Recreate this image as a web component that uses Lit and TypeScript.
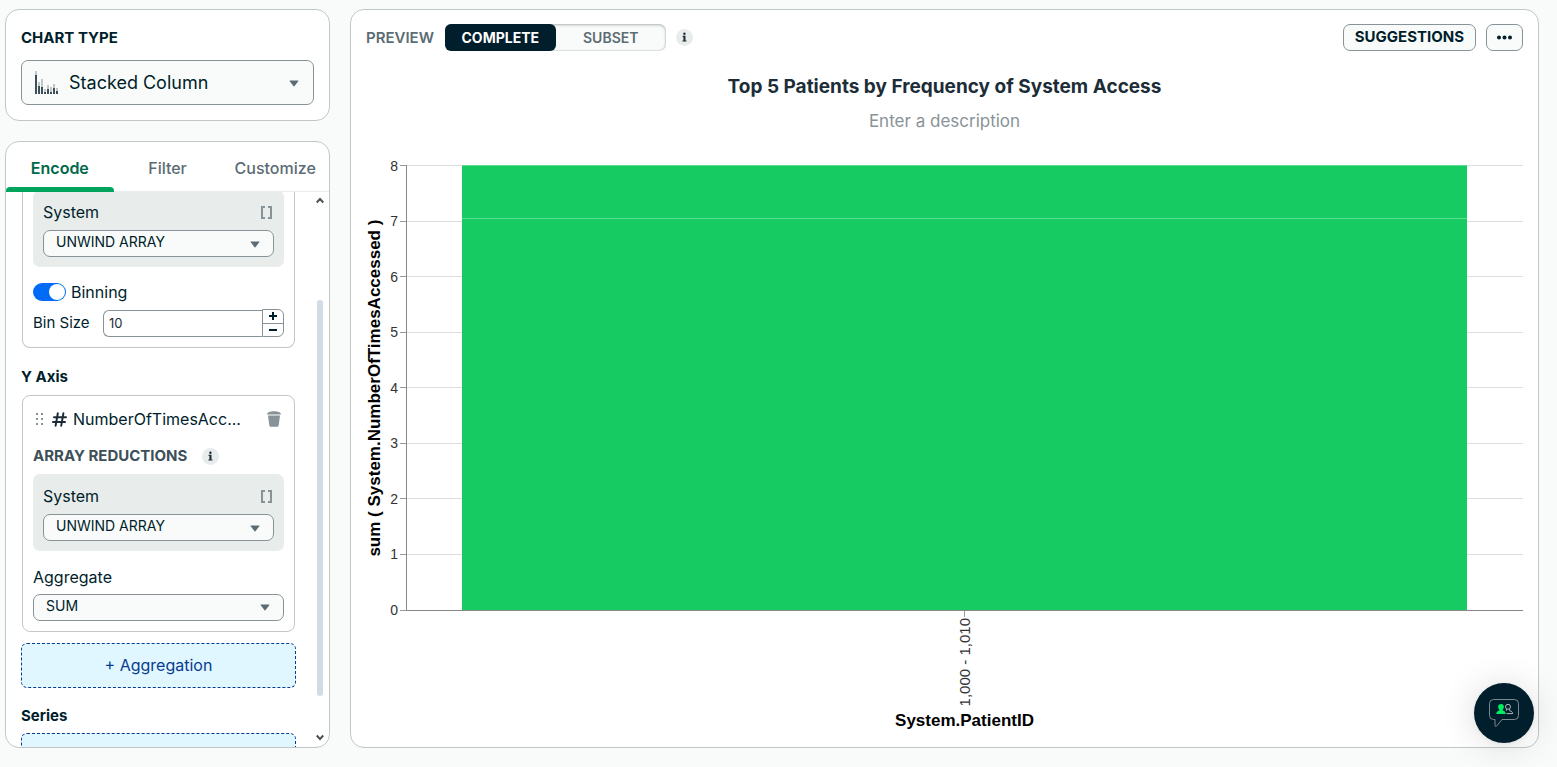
import { LitElement, html, css, svg } from "lit";
import { customElement, property, state } from "lit/decorators.js";
import { classMap } from "lit/directives/class-map.js";
import { styleMap } from "lit/directives/style-map.js";

const infoIcon = html`<svg class="info" viewBox="0 0 17 17" width="17" height="17" aria-label="More information">
  <circle cx="8.5" cy="8.5" r="8.5" fill="#e8edeb" />
  <g fill="#1c2d38">
    <circle cx="8.4" cy="4.7" r="1.2" />
    <path d="M6.600 6.800h2.900v4.700h1v1.100H6.400v-1.100h1V7.900h-.8z" />
  </g>
</svg>`;

const caret = html`<svg class="caret" viewBox="0 0 10 7" width="10" height="7" aria-hidden="true">
  <path d="M1 .5h8a.4.4 0 0 1 .3.7L5.400 6.200a.5.5 0 0 1-.8 0L.7 1.200A.4.4 0 0 1 1 .5z" fill="#5c6c75" />
</svg>`;

const selectStyles = css`
  .select {
    display: grid;
    align-items: center;
  }
  .select > * {
    grid-area: 1 / 1;
  }
  .select select {
    appearance: none;
    width: 100%;
    height: 27px;
    margin: 0;
    padding: 0 28px 5px 12px;
    border: 1px solid #889397;
    border-radius: 7px;
    background: #f9fbfa;
    color: #001e2b;
    font: 14px Inter, sans-serif;
  }
  .select .caret {
    justify-self: end;
    margin-right: 14px;
    pointer-events: none;
  }
`;

/** Grey block that chooses how an array field is reduced. */
@customElement("array-reduction")
class ArrayReduction extends LitElement {
  @property() field = "System";

  static styles = [
    selectStyles,
    css`
      :host {
        display: block;
        padding: 12px 10px 10px;
        border-radius: 7px;
        background: #e8edeb;
      }
      .head {
        display: flex;
        justify-content: space-between;
        align-items: center;
        padding-bottom: 8px;
        line-height: 20px;
      }
      .head svg {
        margin-right: 1px;
      }
      .select .caret {
        margin-top: 1px;
      }
    `,
  ];

  render() {
    return html`
      <div class="head">
        <label for="method">${this.field}</label>
        <svg viewBox="0 0 13 13" width="13" height="13" fill="none" stroke="#889397" stroke-width="2" aria-hidden="true">
          <path d="M5 1H2v11h3M8 1h3v11H8" />
        </svg>
      </div>
      <div class="select">
        <select id="method"><option>UNWIND ARRAY</option></select>
        ${caret}
      </div>
    `;
  }
}

interface Segment {
  value: number;
}

/** Stacked column chart with a single binned category. */
@customElement("column-chart")
class ColumnChart extends LitElement {
  private ticks = [8, 7, 6, 5, 4, 3, 2, 1, 0];
  private segments: Segment[] = [{ value: 52 }, { value: 392 }];

  static styles = css`
    :host {
      display: grid;
      grid-template-columns: 18px 16px 6px 1fr;
      grid-template-rows: 1fr auto;
      font-family: "Liberation Sans", Arial, sans-serif;
      color: #000;
    }
    .y-title,
    .tick-label {
      writing-mode: vertical-rl;
      transform: rotate(180deg);
      white-space: nowrap;
    }
    .y-title,
    .x-title {
      font-size: 17px;
      font-weight: 700;
      line-height: 18px;
      text-align: center;
    }
    .scale {
      display: flex;
      flex-direction: column;
      justify-content: space-between;
    }
    .scale > div {
      display: flex;
      justify-content: flex-end;
      align-items: center;
      height: 1px;
    }
    .labels {
      padding-right: 2px;
      font-size: 14px;
      color: #333;
    }
    .ticks > div {
      background: #999;
    }
    .grid,
    .bar {
      grid-area: 1 / 4;
    }
    .grid {
      border-left: 1px solid #888;
    }
    .grid > div {
      background: #ddd;
    }
    .grid > div:last-child {
      z-index: 1;
      background: #888;
    }
    .bar {
      display: flex;
      flex-direction: column;
      margin: 0 5% 1px;
    }
    .segment {
      box-sizing: border-box;
      border-top: 1px solid #5cdc90;
      background: #16cc62;
    }
    .x-axis {
      grid-area: 2 / 4;
      display: flex;
      flex-direction: column;
      align-items: center;
    }
    .x-tick {
      width: 1px;
      height: 6px;
      background: #999;
    }
    .tick-label {
      padding-bottom: 1px;
      font-size: 15px;
      line-height: 17px;
      color: #333;
    }
    .x-title {
      padding-top: 6px;
    }
  `;

  render() {
    return html`
      <div class="y-title">sum ( System.NumberOfTimesAccessed )</div>
      <div class="scale labels">${this.ticks.map((t) => html`<div>${t}</div>`)}</div>
      <div class="scale ticks">${this.ticks.map(() => html`<div></div>`)}</div>
      <div class="scale grid">${this.ticks.map(() => html`<div></div>`)}</div>
      <div class="bar">
        ${this.segments.map((s) => html`<div class="segment" style=${styleMap({ flex: `${s.value} 0 0` })}></div>`)}
      </div>
      <div class="x-axis">
        <div class="x-tick"></div>
        <div class="tick-label">1,000 - 1,010</div>
        <div class="x-title">System.PatientID</div>
      </div>
    `;
  }
}

@customElement("app-root")
class AppRoot extends LitElement {
  @state() private tab = "Encode";
  @state() private mode = "COMPLETE";

  static styles = [
    selectStyles,
    css`
      :host {
        box-sizing: border-box;
        display: grid;
        grid-template-columns: 325px 1fr;
        gap: 20px;
        height: 100vh;
        padding: 9px 18px 19px 5px;
        background: #f9fbfa;
        color: #001e2b;
        font: 16px/20px Inter, sans-serif;
      }
      * {
        box-sizing: border-box;
      }
      button,
      input {
        margin: 0;
        font: inherit;
        color: inherit;
      }
      h2,
      h3,
      h4 {
        margin: 0;
        font-size: 15px;
        line-height: 20px;
        font-weight: 700;
      }
      .panel {
        border: 1px solid #c1c7c6;
        border-radius: 14px;
        background: #fff;
      }
      aside {
        display: flex;
        flex-direction: column;
        gap: 20px;
        min-height: 0;
      }

      .type {
        padding: 18px 15px 15px;
      }
      .type h2 {
        padding-bottom: 13px;
        line-height: 19px;
      }
      .type select {
        height: 45px;
        padding: 0 32px 0 47px;
        font-size: 18px;
      }
      .type .chart-icon {
        margin-left: 13px;
        pointer-events: none;
      }
      .type .caret {
        margin-right: 15px;
        margin-top: 1px;
      }

      .encode {
        display: flex;
        flex-direction: column;
        flex: 1;
        min-height: 0;
        overflow: hidden;
      }
      .tabs {
        display: flex;
        height: 50px;
        border-bottom: 1px solid #e8edeb;
      }
      .tab {
        position: relative;
        flex: 1;
        height: 50px;
        padding: 2px 0 0;
        border: 0;
        background: none;
        color: #5c6c75;
        font-weight: 500;
      }
      .tab.on {
        color: #00684a;
        font-weight: 600;
      }
      .tab.on::after {
        content: "";
        position: absolute;
        inset: auto 0 0;
        height: 5px;
        border-radius: 4px 4px 0 0;
        background: #00a35c;
      }
      .body {
        display: flex;
        flex: 1;
        min-height: 0;
      }
      .fields {
        flex: 1;
        min-width: 0;
        padding: 0 16px 0 15px;
        overflow: hidden;
      }
      .card {
        margin: 0 1px;
        padding: 10px;
        border: 1px solid #c1c7c6;
        border-radius: 8px;
      }
      .card.continued {
        margin-top: -2px;
        padding-top: 0;
        border-top: 0;
        border-radius: 0 0 8px 8px;
      }
      .binning {
        display: flex;
        align-items: center;
        gap: 5px;
        padding: 15px 0 7px;
      }
      .switch {
        appearance: none;
        width: 33px;
        height: 18px;
        padding: 1px;
        border-radius: 9px;
        background: #016bf8;
      }
      .switch::after {
        content: "";
        display: block;
        width: 16px;
        height: 16px;
        margin-left: 15px;
        border-radius: 50%;
        background: #fff;
      }
      .bin-size {
        display: flex;
        align-items: center;
        font-size: 15px;
      }
      .bin-size label {
        width: 70px;
      }
      .bin-size input {
        flex: 1;
        min-width: 0;
        height: 27px;
        padding: 0 5px;
        border: 1px solid #889397;
        border-right: 0;
        border-radius: 6px 0 0 6px;
        background: #fff;
        font-size: 13px;
        color: #1c2d38;
      }
      .steps {
        display: grid;
        width: 22px;
        height: 28px;
        border: 1px solid #889397;
        border-radius: 0 6px 6px 0;
      }
      .steps button {
        display: grid;
        place-items: center;
        padding: 0;
        border: 0;
        background: none;
      }
      .steps button + button {
        border-top: 1px solid #889397;
      }
      .fields h3 {
        padding: 19px 0 8px;
      }
      .field-row {
        display: flex;
        align-items: center;
        padding: 3px 3px 3px 3px;
      }
      .field-row .hash {
        margin: 0 6px 0 8px;
      }
      .field-row span {
        flex: 1;
      }
      .remove {
        display: flex;
        padding: 0;
        border: 0;
        background: none;
      }
      .reductions {
        display: flex;
        align-items: center;
        gap: 15px;
        padding: 14px 0 8px;
        color: #3d4f58;
      }
      .aggregate {
        display: block;
        padding: 16px 0 7px;
      }
      .add {
        display: block;
        width: 100%;
        height: 45px;
        margin-top: 11px;
        padding: 0 0 2px;
        border: 1px dashed #083c90;
        border-radius: 6px;
        background: #e1f7ff;
        color: #083c90;
      }
      .fields h3.series {
        padding: 18px 0 7px;
      }
      .series + .add {
        margin-top: 0;
      }
      .scrollbar {
        display: flex;
        flex-direction: column;
        align-items: center;
        width: 17px;
        padding: 4px 1px 5px 0;
      }
      .scrollbar button {
        display: flex;
        padding: 0;
        border: 0;
        background: none;
      }
      .track {
        display: grid;
        grid-template-rows: 95fr 396fr 37fr;
        flex: 1;
        width: 6px;
      }
      .thumb {
        grid-row: 2;
        border-radius: 3px;
        background: #d1dbe5;
      }

      .preview {
        display: flex;
        flex-direction: column;
        min-width: 0;
        padding: 13px 15px 17px;
      }
      .toolbar {
        display: flex;
        align-items: center;
        gap: 10px;
        height: 28px;
      }
      .toolbar h2 {
        padding: 1px 1px 0 0;
        color: #5c6c75;
        font-weight: 600;
      }
      .modes {
        display: grid;
        grid-template-columns: 1fr 1fr;
        width: 221px;
        height: 27px;
        border-radius: 7px;
        background: #f9fbfa;
        box-shadow: inset 0 1px 3px #b4bcba, inset 0 0 1px 1px #dfe4e2;
      }
      .modes button {
        padding: 1px 0 0;
        border: 0;
        border-radius: 6px;
        background: none;
        color: #5c6c75;
        font-size: 14px;
        font-weight: 600;
      }
      .modes button.on {
        background: #001e2b;
        color: #fff;
        font-weight: 700;
      }
      .spacer {
        flex: 1;
      }
      .button {
        display: grid;
        place-items: center;
        height: 27px;
        padding: 0 11px;
        border: 1px solid #889397;
        border-radius: 7px;
        background: #f9fbfa;
        font-size: 15px;
        font-weight: 700;
      }
      .button.more {
        padding: 0 9px;
      }
      .title {
        padding-top: 24px;
        font-size: 19px;
        line-height: 24px;
        color: #1c2d38;
        text-align: center;
      }
      .description {
        width: 100%;
        height: 24px;
        margin: 10px 0 32px;
        padding: 0;
        border: 0;
        background: none;
        font-size: 17px;
        text-align: center;
      }
      .description::placeholder {
        color: #889397;
      }
      column-chart {
        flex: 1;
        min-height: 0;
      }
      .chat {
        position: fixed;
        right: 23px;
        bottom: 24px;
        display: grid;
        place-items: center;
        width: 60px;
        height: 60px;
        padding: 0;
        border: 0;
        border-radius: 50%;
        background: #001e2b;
        box-shadow: 0 1px 6px rgba(0, 0, 0, 0.06), 0 2px 36px rgba(0, 0, 0, 0.14);
      }
    `,
  ];

  private columnIcon() {
    // Each column is [dark height, light height].
    const columns = [[19, 4], [8, 4], [7, 8], [2, 3], [5, 4], [2, 5], [6, 4], [3, 3]];
    return html`<svg class="chart-icon" viewBox="0 0 25 24" width="25" height="24" shape-rendering="crispEdges" aria-hidden="true">
      ${columns.map(
        ([d, l], i) => svg`<path fill="#3d4f58" d="M${i * 3 + 1} ${23 - d}h2v${d}h-2z"/>
          <path fill="#c1c7c6" d="M${i * 3 + 1} ${23 - d - l}h2v${l}h-2z"/>`
      )}
    </svg>`;
  }

  render() {
    return html`
      <aside>
        <section class="panel type">
          <h2><label for="chart-type">CHART TYPE</label></h2>
          <div class="select">
            <select id="chart-type"><option>Stacked Column</option></select>
            ${this.columnIcon()} ${caret}
          </div>
        </section>

        <section class="panel encode">
          <nav class="tabs" role="tablist">
            ${["Encode", "Filter", "Customize"].map(
              (t) => html`<button
                class=${classMap({ tab: true, on: t === this.tab })}
                role="tab"
                aria-selected=${t === this.tab}
                @click=${() => (this.tab = t)}
              >${t}</button>`
            )}
          </nav>
          <div class="body">
            <div class="fields">
              <div class="card continued">
                <array-reduction></array-reduction>
                <div class="binning">
                  <input class="switch" id="binning" type="checkbox" role="switch" checked />
                  <label for="binning">Binning</label>
                </div>
                <div class="bin-size">
                  <label for="size">Bin Size</label>
                  <input id="size" type="text" inputmode="numeric" value="10" />
                  <div class="steps">
                    <button aria-label="Increase">
                      <svg viewBox="0 0 8 8" width="8" height="8" stroke="#001e2b" stroke-width="2"><path d="M0 4h8M4 0v8" /></svg>
                    </button>
                    <button aria-label="Decrease">
                      <svg viewBox="0 0 8 8" width="8" height="8" stroke="#001e2b" stroke-width="2"><path d="M0 4h8" /></svg>
                    </button>
                  </div>
                </div>
              </div>

              <h3>Y Axis</h3>
              <div class="card">
                <div class="field-row">
                  <svg viewBox="0 0 8 13" width="8" height="13" fill="#889397" aria-hidden="true">
                    <path d="M0 0h2v2H0zM5 0h2v2H5zM0 5h2v2H0zM5 5h2v2H5zM0 10h2v2H0zM5 10h2v2H5z" />
                  </svg>
                  <svg class="hash" viewBox="0 0 15 15" width="15" height="15" stroke="#1c2d38" stroke-width="2" stroke-linecap="round" aria-hidden="true">
                    <path d="M5.800 1.300 3.600 13.700M11.400 1.300 9.200 13.700M2 5.200h12M1 10h12" />
                  </svg>
                  <span>NumberOfTimesAcc...</span>
                  <button class="remove" aria-label="Remove field">
                    <svg viewBox="0 0 14 16" width="14" height="16" fill="#889397">
                      <path d="M0 3.600C0 1.500 3 .3 7 .3s7 1.200 7 3.300z" />
                      <path d="M1 4.600h12l-1.300 9.600c-.1.9-.8 1.500-1.700 1.500H4c-.9 0-1.600-.6-1.700-1.500z" />
                    </svg>
                  </button>
                </div>
                <h4 class="reductions">ARRAY REDUCTIONS ${infoIcon}</h4>
                <array-reduction></array-reduction>
                <label class="aggregate" for="aggregate">Aggregate</label>
                <div class="select">
                  <select id="aggregate"><option>SUM</option></select>
                  ${caret}
                </div>
              </div>
              <button class="add">+ Aggregation</button>

              <h3 class="series">Series</h3>
              <button class="add" aria-label="Add series"></button>
            </div>
            <div class="scrollbar">
              <button aria-label="Scroll up">
                <svg viewBox="0 0 8 9" width="8" height="9" fill="none" stroke="#505050" stroke-width="2"><path d="M.7 6.500 4 3l3.300 3.500" /></svg>
              </button>
              <div class="track"><div class="thumb"></div></div>
              <button aria-label="Scroll down">
                <svg viewBox="0 0 8 9" width="8" height="9" fill="none" stroke="#505050" stroke-width="2"><path d="M.7 2.500 4 6l3.300-3.500" /></svg>
              </button>
            </div>
          </div>
        </section>
      </aside>

      <main class="panel preview">
        <div class="toolbar">
          <h2>PREVIEW</h2>
          <div class="modes">
            ${["COMPLETE", "SUBSET"].map(
              (m) => html`<button class=${classMap({ on: m === this.mode })} @click=${() => (this.mode = m)}>${m}</button>`
            )}
          </div>
          ${infoIcon}
          <div class="spacer"></div>
          <button class="button">SUGGESTIONS</button>
          <button class="button more" aria-label="More options">
            <svg viewBox="0 0 17 5" width="17" height="5" fill="#001e2b">
              <circle cx="3" cy="2.500" r="2" /><circle cx="8.500" cy="2.500" r="2" /><circle cx="14" cy="2.500" r="2" />
            </svg>
          </button>
        </div>
        <h3 class="title">Top 5 Patients by Frequency of System Access</h3>
        <input class="description" type="text" placeholder="Enter a description" aria-label="Description" />
        <column-chart></column-chart>
      </main>

      <button class="chat" aria-label="Open chat">
        <svg viewBox="0 0 30 30" width="30" height="30" fill="none">
          <path d="M4.500 1.500h21a4 4 0 0 1 4 4v12a4 4 0 0 1-4 4H13l-5.500 6.700c-.5.6-1.500.3-1.500-.5v-6.200H4.500a4 4 0 0 1-4-4v-12a4 4 0 0 1 4-4z" stroke="#7b8b92" />
          <g fill="#00ed64">
            <circle cx="12" cy="8.800" r="2.900" />
            <path d="M7.300 16c0-1.800 1-2.800 3-3.400V11h3.400v1.600c2 .6 3 1.600 3 3.400z" />
          </g>
          <g stroke="#c1ccc6" stroke-width=".9">
            <circle cx="19" cy="8.800" r="2.500" />
            <path d="M17.600 15.600h6c0-1.600-1-2.400-3-2.900v-1.500M17.500 11.200v1.500" />
          </g>
        </svg>
      </button>
    `;
  }
}
